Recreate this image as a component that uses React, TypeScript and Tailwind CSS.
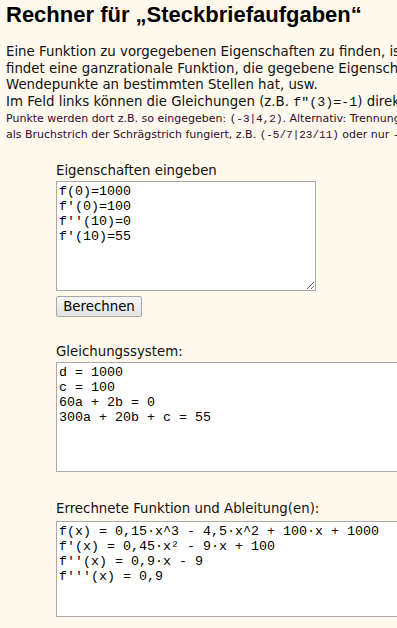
import React from "react";

export default function App() {
  return (
    <div className="min-h-screen w-full overflow-hidden bg-[#fef9ec] font-['DejaVu_Sans',Verdana,sans-serif] text-[#111]">
      <div className="w-[640px] px-[6px] pt-[3px]">
        <h1 className="whitespace-nowrap font-['Liberation_Sans',Arial,sans-serif] text-[22px] font-bold leading-[24px] text-black">
          Rechner für „Steckbriefaufgaben“
        </h1>
        <div className="mt-[17px] whitespace-nowrap text-[13.33px] leading-[16.6px]">
          <p>
            Eine Funktion zu vorgegebenen Eigenschaften zu finden, ist eine typische Aufgabe. Man
            <br />
            findet eine ganzrationale Funktion, die gegebene Eigenschaften hat, z.B. Hoch- oder
            <br />
            Wendepunkte an bestimmten Stellen hat, usw.
            <br />
            Im Feld links können die Gleichungen (z.B.{" "}
            <span className="font-['Liberation_Mono','Courier_New',monospace] text-[13.33px]">f"(3)=-1</span>) direkt eingegeben werden.
          </p>
          <p className="text-[11px] leading-[16px] text-[#2e0c2e]">
            Punkte werden dort z.B. so eingegeben:{" "}
            <span className="font-['Liberation_Mono','Courier_New',monospace]">(-3|4,2)</span>. Alternativ: Trennung durch Semikolon, wobei
            <br />
            als Bruchstrich der Schrägstrich fungiert, z.B.{" "}
            <span className="font-['Liberation_Mono','Courier_New',monospace]">(-5/7|23/11)</span> oder nur{" "}
            <span className="font-['Liberation_Mono','Courier_New',monospace]">-5/7</span>.
          </p>
        </div>

        <div className="ml-[50px] mt-[20px] flex flex-col items-start text-[13.33px]">
          <div className="leading-[16px]">Eigenschaften eingeben</div>
          <textarea
            className="mt-[2px] h-[110px] w-[260px] resize border border-[#a9a9a9] bg-white px-[2px] pt-[2px] font-['Liberation_Mono','Courier_New',monospace] text-[13.33px] leading-[15px] text-black outline-none"
            defaultValue={"f(0)=1000\nf'(0)=100\nf''(10)=0\nf'(10)=55"}
          />
          <button className="mt-[5px] h-[21px] w-[86px] rounded-[2px] border border-[#a8a8a8] bg-gradient-to-b from-[#f7f7f7] to-[#e1e1e1] text-[13.33px] leading-[19px] text-black">
            Berechnen
          </button>

          <div className="mt-[27px] leading-[16px]">Gleichungssystem:</div>
          <textarea
            className="mt-[2px] h-[110px] w-[420px] resize-none border border-[#a9a9a9] bg-white px-[2px] pt-[2px] font-['Liberation_Mono','Courier_New',monospace] text-[13.33px] leading-[15px] text-black outline-none"
            defaultValue={"d = 1000\nc = 100\n60a + 2b = 0\n300a + 20b + c = 55"}
          />

          <div className="mt-[29px] leading-[16px]">Errechnete Funktion und Ableitung(en):</div>
          <textarea
            className="mt-[4px] h-[96px] w-[420px] resize-none border border-[#a9a9a9] bg-white px-[2px] pt-[2px] font-['Liberation_Mono','Courier_New',monospace] text-[13.33px] leading-[15px] text-black outline-none"
            defaultValue={"f(x) = 0,15·x^3 - 4,5·x^2 + 100·x + 1000\nf'(x) = 0,45·x² - 9·x + 100\nf''(x) = 0,9·x - 9\nf'''(x) = 0,9"}
          />
        </div>
      </div>
    </div>
  );
}
